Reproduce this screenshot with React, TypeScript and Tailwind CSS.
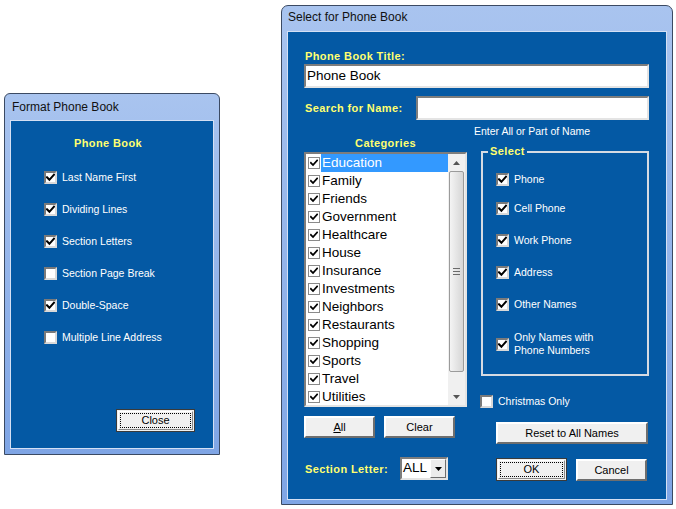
import React from 'react';

const Tick = ({ size = 9 }: { size?: number }) => (
  <svg width={size} height={size} viewBox="0 0 9 9">
    <path d="M1 4.3 L3.4 6.8 L8 1.6" fill="none" stroke="#000" strokeWidth="2" strokeLinecap="square" />
  </svg>
);

const Box = ({ checked }: { checked: boolean }) => (
  <span className="flex h-[13px] w-[13px] shrink-0 items-center justify-center border-2 border-t-[#7a7a7a] border-l-[#7a7a7a] border-b-[#d9d9d9] border-r-[#d9d9d9] bg-white">
    {checked && <Tick />}
  </span>
);

const Option = ({ label, checked }: { label: string; checked: boolean }) => (
  <div className="flex h-[13px] items-center gap-[5px]">
    <Box checked={checked} />
    <span className="text-[10.5px] leading-[13px] text-white">{label}</span>
  </div>
);

const Btn = ({ children, className = '' }: { children: React.ReactNode; className?: string }) => (
  <div className={`flex h-[22px] items-center justify-center border-2 border-t-white border-l-white border-b-[#6e6e6e] border-r-[#6e6e6e] bg-[#f0f0f0] text-[11px] text-black ${className}`}>
    {children}
  </div>
);

const DefaultBtn = ({ children, className = '' }: { children: React.ReactNode; className?: string }) => (
  <div className={`flex h-[23px] border border-[#3a3a3a] bg-[#f0f0f0] p-[1px] ${className}`}>
    <div className="flex flex-1 border border-t-white border-l-white border-b-[#8a8a8a] border-r-[#8a8a8a] p-[1px]">
      <div className="flex flex-1 items-center justify-center border border-dotted border-black text-[11px] text-black">
        {children}
      </div>
    </div>
  </div>
);

const Label = ({ children, className = '' }: { children: React.ReactNode; className?: string }) => (
  <div className={`text-[11px] font-bold leading-[16px] tracking-[0.4px] text-[#ffff70] ${className}`}>{children}</div>
);

const categories = [
  'Education', 'Family', 'Friends', 'Government', 'Healthcare', 'House', 'Insurance',
  'Investments', 'Neighbors', 'Restaurants', 'Shopping', 'Sports', 'Travel', 'Utilities',
];

const Arrow = ({ up }: { up?: boolean }) => (
  <svg width="7" height="4" viewBox="0 0 7 4">
    <polygon points={up ? '0,4 3.5,0 7,4' : '0,0 3.5,4 7,0'} fill="#555" />
  </svg>
);

const CategoryList = () => (
  <div className="mt-[1px] flex h-[255px] overflow-hidden border-2 border-t-[#7d7d7d] border-l-[#7d7d7d] border-b-[#e4e4e4] border-r-[#e4e4e4] bg-white">
    <div className="flex w-[142px] flex-col">
      {categories.map((c, i) => (
        <div key={c} className="flex h-[18px] shrink-0 items-center">
          <span className="ml-[2px] flex h-[12px] w-[12px] shrink-0 items-center justify-center border border-[#8a8a8a] bg-white">
            <Tick size={8} />
          </span>
          <span
            className={`ml-[1px] flex h-[18px] flex-1 items-center pl-[1px] text-[13.5px] ${
              i === 0 ? 'bg-[#3399ff] text-white' : 'text-black'
            }`}
          >
            {c}
          </span>
        </div>
      ))}
    </div>
    <div className="flex w-[17px] flex-col bg-[#f0f0f0]">
      <div className="flex h-[17px] items-center justify-center"><Arrow up /></div>
      <div className="mx-[1px] flex h-[201px] items-center justify-center rounded-[2px] border border-[#9b9b9b] bg-gradient-to-r from-[#f4f4f4] to-[#d6d6d6]">
        <div className="flex flex-col gap-[2px]">
          <div className="h-[1px] w-[7px] bg-[#6b6b6b]" />
          <div className="h-[1px] w-[7px] bg-[#6b6b6b]" />
          <div className="h-[1px] w-[7px] bg-[#6b6b6b]" />
        </div>
      </div>
      <div className="flex-1" />
      <div className="flex h-[17px] items-center justify-center"><Arrow /></div>
    </div>
  </div>
);

export default function App() {
  return (
    <div className="flex h-[509px] w-[676px] items-start bg-white font-['Liberation_Sans',Arial,sans-serif]">
      {/* Format Phone Book */}
      <div className="ml-[4px] mt-[93px] flex h-[362px] w-[216px] flex-col rounded-t-[6px] border border-[#3b4a63] bg-gradient-to-b from-[#a9c4ef] to-[#7fa5e5] px-[5px] pb-[5px]">
        <div className="h-[26px] pl-[2px] pt-[6px] text-[12px] leading-[14px] text-[#111]">Format Phone Book</div>
        <div className="flex flex-1 flex-col border border-[#d4e0f4] bg-[#0459a4]">
          <Label className="mt-[14px] pr-[8px] text-center">Phone Book</Label>
          <div className="ml-[33px] mt-[20px] flex flex-col gap-[19px]">
            <Option label="Last Name First" checked />
            <Option label="Dividing Lines" checked />
            <Option label="Section Letters" checked />
            <Option label="Section Page Break" checked={false} />
            <Option label="Double-Space" checked />
            <Option label="Multiple Line Address" checked={false} />
          </div>
          <DefaultBtn className="mb-[16px] mr-[18px] mt-auto w-[79px] self-end">Close</DefaultBtn>
        </div>
      </div>

      {/* Select for Phone Book */}
      <div className="ml-[61px] mt-[5px] flex h-[500px] w-[392px] flex-col rounded-t-[7px] border border-[#3b4a63] bg-gradient-to-b from-[#a9c4ef] to-[#7fa5e5] px-[5px] pb-[4px]">
        <div className="h-[25px] pl-[1px] pt-[4px] text-[12px] leading-[14px] text-[#111]">Select for Phone Book</div>
        <div className="flex flex-1 flex-col border border-[#d4e0f4] bg-[#0459a4] pl-[16px] pt-[16px]">
          <Label className="pl-[1px]">Phone Book Title:</Label>
          <div className="flex h-[24px] w-[345px] items-center border-2 border-t-[#7d7d7d] border-l-[#7d7d7d] border-b-[#e4e4e4] border-r-[#e4e4e4] bg-white pl-[1px] text-[13.5px] text-black">
            Phone Book
          </div>
          <div className="mt-[8px] flex h-[24px] items-center">
            <Label className="w-[112px] pl-[1px]">Search for Name:</Label>
            <div className="h-[24px] w-[233px] border-2 border-t-[#7d7d7d] border-l-[#7d7d7d] border-b-[#e4e4e4] border-r-[#e4e4e4] bg-white" />
          </div>

          <div className="mt-[4px] flex gap-[7px]">
            <div className="flex w-[163px] flex-col pt-[11px]">
              <Label className="text-center">Categories</Label>
              <CategoryList />
              <div className="mt-[9px] flex gap-[9px]">
                <Btn className="w-[71px]"><span><span className="underline">A</span>ll</span></Btn>
                <Btn className="w-[71px]">Clear</Btn>
              </div>
              <div className="mt-[19px] flex h-[23px] items-center">
                <Label className="w-[96px] pl-[1px]">Section Letter:</Label>
                <div className="flex h-[23px] w-[48px] border-2 border-t-[#7d7d7d] border-l-[#7d7d7d] border-b-[#e4e4e4] border-r-[#e4e4e4] bg-white">
                  <span className="flex flex-1 items-center pl-[1px] text-[13.5px] text-black">ALL</span>
                  <div className="flex w-[16px] items-center justify-center border border-t-white border-l-white border-b-[#6e6e6e] border-r-[#6e6e6e] bg-[#ececec]">
                    <svg width="7" height="4" viewBox="0 0 7 4"><polygon points="0,0 3.5,4 7,0" fill="#000" /></svg>
                  </div>
                </div>
              </div>
            </div>

            <div className="flex flex-col">
              <div className="text-[10.5px] leading-[14px] text-white">Enter All or Part of Name</div>
              <div className="relative ml-[7px] mt-[13px] flex h-[225px] w-[168px] flex-col border-2 border-[#d6dbe3] pl-[13px] pt-[20px]">
                <span className="absolute left-[5px] top-[-10px] bg-[#0459a4] px-[2px] text-[11px] font-bold leading-[16px] tracking-[0.4px] text-[#ffff70]">Select</span>
                <Option label="Phone" checked />
                <div className="mt-[16px]"><Option label="Cell Phone" checked /></div>
                <div className="mt-[19px]"><Option label="Work Phone" checked /></div>
                <div className="mt-[19px]"><Option label="Address" checked /></div>
                <div className="mt-[19px]"><Option label="Other Names" checked /></div>
                <div className="mt-[20px] flex h-[26px] items-center gap-[5px]">
                  <Box checked />
                  <span className="text-[10.5px] leading-[13px] text-white">Only Names with<br />Phone Numbers</span>
                </div>
              </div>
              <div className="ml-[6px] mt-[19px]"><Option label="Christmas Only" checked={false} /></div>
              <Btn className="ml-[22px] mt-[14px] w-[152px]">Reset to All Names</Btn>
              <div className="ml-[22px] mt-[14px] flex gap-[9px]">
                <DefaultBtn className="w-[71px]">OK</DefaultBtn>
                <Btn className="mt-[1px] w-[71px]">Cancel</Btn>
              </div>
            </div>
          </div>
        </div>
      </div>
    </div>
  );
}
